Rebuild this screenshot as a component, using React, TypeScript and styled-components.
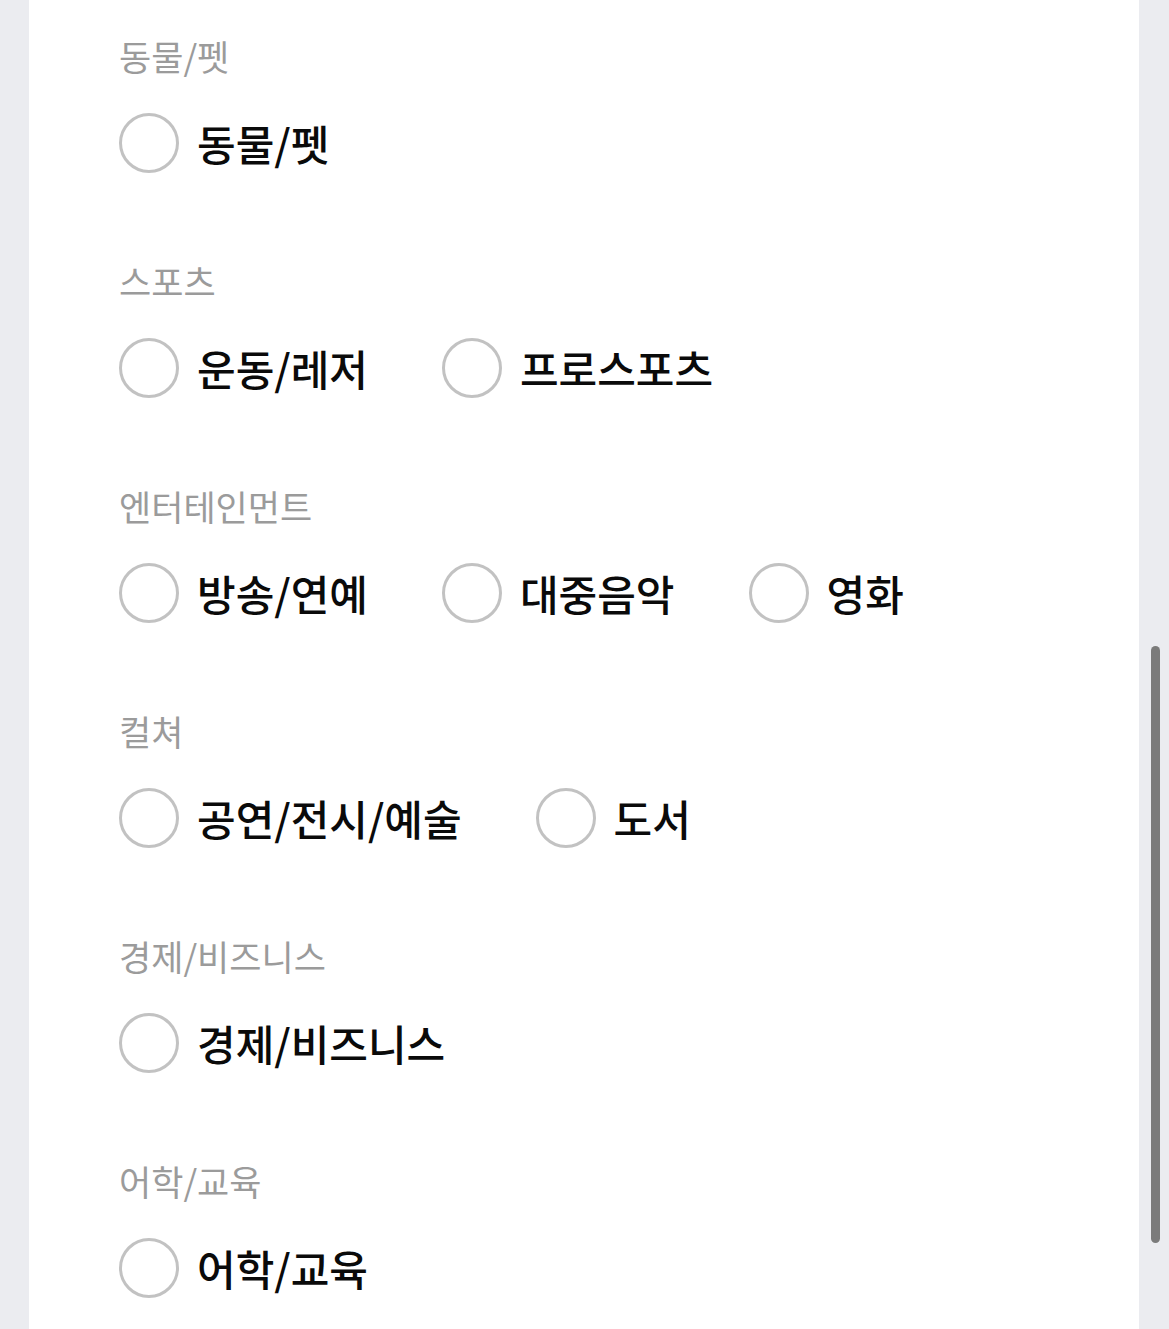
import React from "react";
import styled, { createGlobalStyle } from "styled-components";

const Global = createGlobalStyle`
  html, body { margin: 0; padding: 0; background: #ebecf0; }
  body { font-family: "Noto Sans CJK KR", "Noto Sans", sans-serif; }
`;

const Page = styled.div`
  display: flex;
  min-height: 1329px;
  padding-left: 29px;
`;

const Panel = styled.main`
  width: 1110px;
  background: #ffffff;
  padding: 33px 0 60px 90px;
  box-sizing: border-box;
  display: flex;
  flex-direction: column;
`;

const Section = styled.section`
  display: flex;
  flex-direction: column;
  gap: 34px;
  padding-bottom: 85px;
`;

const SectionTitle = styled.h3`
  margin: 0;
  font-size: 35px;
  line-height: 46px;
  font-weight: 400;
  color: #9b9b9b;
`;

const OptionRow = styled.div`
  display: flex;
  align-items: center;
  gap: 74px;
  height: 60px;
`;

const Option = styled.label`
  display: flex;
  align-items: center;
  gap: 18px;
  cursor: pointer;
`;

const Radio = styled.span`
  width: 60px;
  height: 60px;
  box-sizing: border-box;
  border: 3px solid #c2c2c2;
  border-radius: 50%;
  flex-shrink: 0;
`;

const OptionText = styled.span`
  font-size: 42px;
  line-height: 60px;
  color: #0a0a0a;
  font-weight: 500;
`;

const ScrollThumb = styled.div`
  position: fixed;
  left: 1151px;
  top: 646px;
  width: 9px;
  height: 597px;
  border-radius: 5px;
  background: #7b7b7b;
`;

const data: { title: string; options: string[] }[] = [
  { title: "동물/펫", options: ["동물/펫"] },
  { title: "스포츠", options: ["운동/레저", "프로스포츠"] },
  { title: "엔터테인먼트", options: ["방송/연예", "대중음악", "영화"] },
  { title: "컬쳐", options: ["공연/전시/예술", "도서"] },
  { title: "경제/비즈니스", options: ["경제/비즈니스"] },
  { title: "어학/교육", options: ["어학/교육"] },
];

export default function App() {
  return (
    <>
      <Global />
      <Page>
        <Panel>
          {data.map((s) => (
            <Section key={s.title}>
              <SectionTitle>{s.title}</SectionTitle>
              <OptionRow>
                {s.options.map((o) => (
                  <Option key={o}>
                    <Radio />
                    <OptionText>{o}</OptionText>
                  </Option>
                ))}
              </OptionRow>
            </Section>
          ))}
        </Panel>
      </Page>
      <ScrollThumb />
    </>
  );
}
